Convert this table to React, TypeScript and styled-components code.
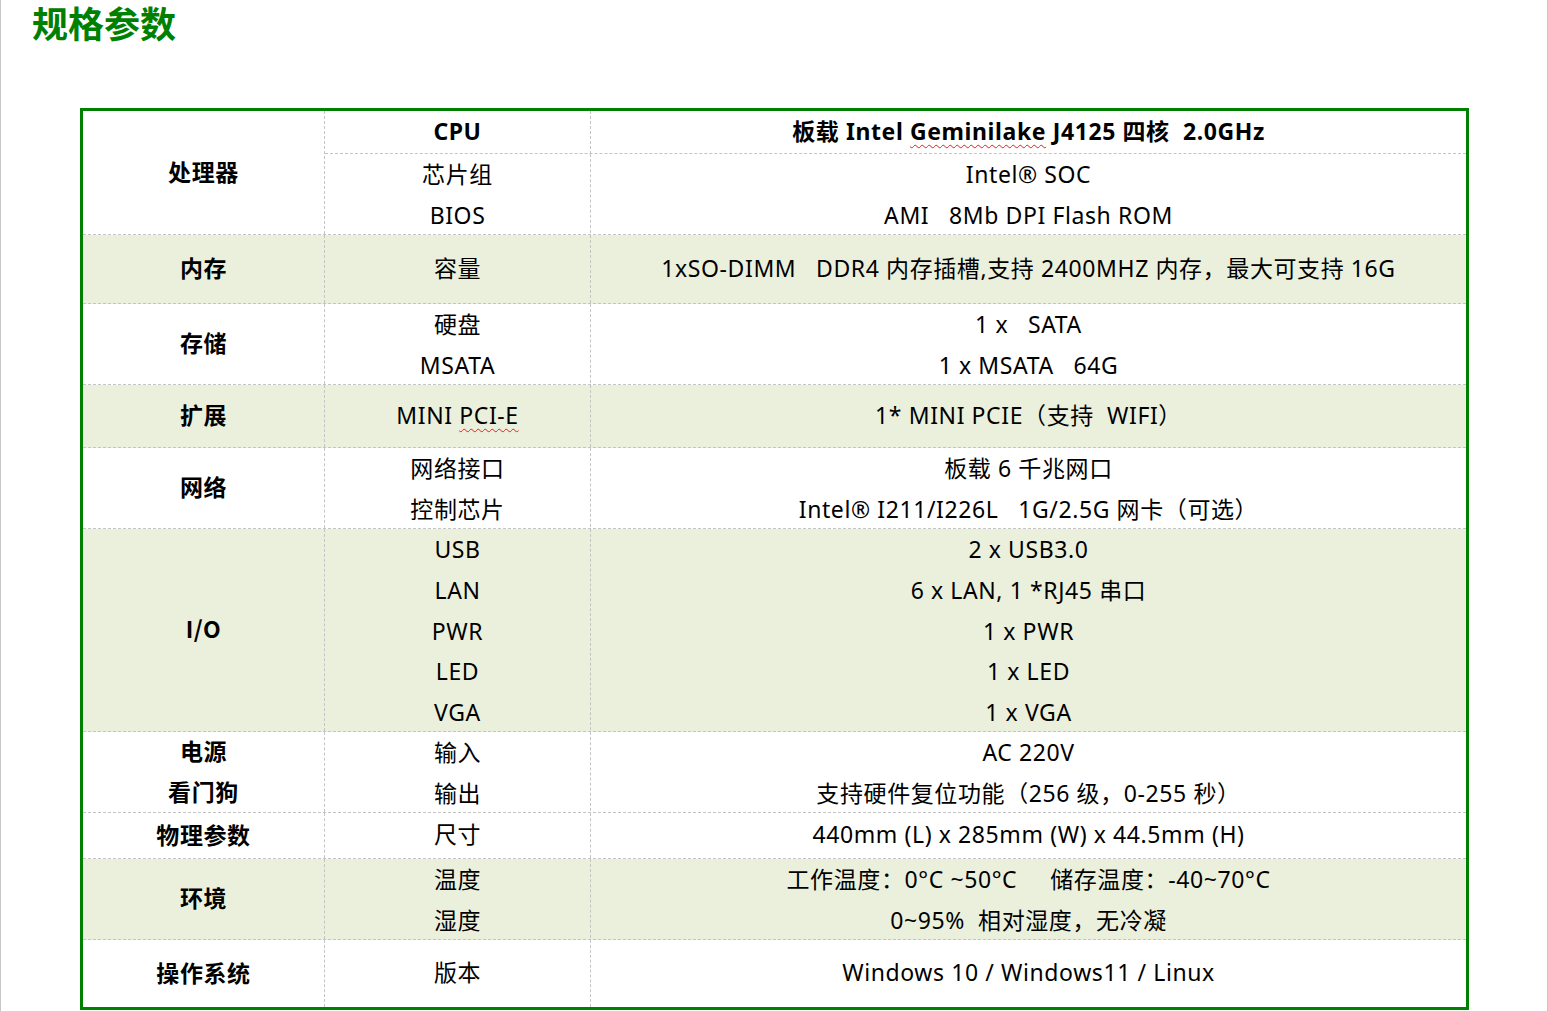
import React from "react";
import styled, { createGlobalStyle } from "styled-components";

const Global = createGlobalStyle`
  html, body { margin: 0; padding: 0; background: #fff; }
  * { box-sizing: border-box; }
`;

const Page = styled.div`
  width: 1548px;
  height: 1011px;
  border-left: 1px solid #c8c8c8;
  border-right: 1px solid #c8c8c8;
  overflow: hidden;
  font-family: "Noto Sans", "Noto Sans CJK SC", sans-serif;
  color: #000;
`;

const Title = styled.h1`
  margin: 0 0 0 31px;
  padding-top: 2px;
  height: 44px;
  font-size: 36px;
  line-height: 40px;
  font-weight: 700;
  color: #008000;
  font-family: "Noto Sans CJK SC", sans-serif;
`;

const Table = styled.div`
  margin: 64px 0 0 79px;
  width: 1389px;
  border: 3px solid #008000;
  display: flex;
  flex-direction: column;
  font-size: 23px;
  letter-spacing: 0.6px;
`;

const Group = styled.div<{ $h: number; $shade?: boolean; $last?: boolean }>`
  display: flex;
  height: ${(p) => p.$h}px;
  background: ${(p) => (p.$shade ? "#ebf0dd" : "#fff")};
  border-bottom: ${(p) => (p.$last ? "none" : "1px dashed #c4c4c4")};
`;

const LabelCell = styled.div`
  width: 242px;
  flex: none;
  border-right: 1px dashed #c4c4c4;
  display: flex;
  flex-direction: column;
  justify-content: center;
  align-items: center;
  padding-bottom: 3px;
  font-weight: 700;
  font-family: "Noto Sans CJK SC", sans-serif;
`;

const Body = styled.div`
  flex: 1;
  display: flex;
  flex-direction: column;
`;

const SubRow = styled.div<{ $h?: number; $divider?: boolean }>`
  display: grid;
  grid-template-columns: 266px 1fr;
  ${(p) => (p.$h ? `height: ${p.$h}px; flex: none;` : "flex: 1;")}
  border-bottom: ${(p) => (p.$divider ? "1px dashed #c4c4c4" : "none")};
`;

const KeyCell = styled.div<{ $bold?: boolean }>`
  border-right: 1px dashed #c4c4c4;
  display: flex;
  flex-direction: column;
  justify-content: center;
  align-items: center;
  padding-bottom: 2px;
  font-weight: ${(p) => (p.$bold ? 700 : 400)};
`;

const ValueCell = styled.div<{ $bold?: boolean }>`
  display: flex;
  flex-direction: column;
  justify-content: center;
  align-items: center;
  padding-bottom: 2px;
  font-weight: ${(p) => (p.$bold ? 700 : 400)};
`;

const Line = styled.div`
  height: 40.75px;
  line-height: 40.75px;
  white-space: pre;
  flex: none;
`;

const Spell = styled.span`
  text-decoration: underline wavy #e02020;
  text-decoration-thickness: 1px;
  text-underline-offset: 4px;
`;

type Row = { h: number; shade?: boolean; label: React.ReactNode[]; keys: React.ReactNode[]; vals: React.ReactNode[] };

const rows: Row[] = [
  { h: 69, shade: true, label: ["内存"], keys: ["容量"], vals: ["1xSO-DIMM   DDR4 内存插槽,支持 2400MHZ 内存，最大可支持 16G"] },
  { h: 81, label: ["存储"], keys: ["硬盘", "MSATA"], vals: ["1 x   SATA", "1 x MSATA   64G"] },
  {
    h: 63,
    shade: true,
    label: ["扩展"],
    keys: [<>MINI <Spell>PCI-E</Spell></>],
    vals: ["1* MINI PCIE（支持  WIFI）"],
  },
  { h: 81, label: ["网络"], keys: ["网络接口", "控制芯片"], vals: ["板载 6 千兆网口", "Intel® I211/I226L   1G/2.5G 网卡（可选）"] },
  {
    h: 203,
    shade: true,
    label: ["I/O"],
    keys: ["USB", "LAN", "PWR", "LED", "VGA"],
    vals: ["2 x USB3.0", "6 x LAN, 1 *RJ45 串口", "1 x PWR", "1 x LED", "1 x VGA"],
  },
  { h: 81, label: ["电源", "看门狗"], keys: ["输入", "输出"], vals: ["AC 220V", "支持硬件复位功能（256 级，0-255 秒）"] },
  { h: 46, label: ["物理参数"], keys: ["尺寸"], vals: ["440mm (L) x 285mm (W) x 44.5mm (H)"] },
  {
    h: 81,
    shade: true,
    label: ["环境"],
    keys: ["温度", "湿度"],
    vals: ["工作温度：0°C ~50°C     储存温度：-40~70°C", "0~95%  相对湿度，无冷凝"],
  },
  { h: 67, label: ["操作系统"], keys: ["版本"], vals: ["Windows 10 / Windows11 / Linux"] },
];

export default function App() {
  return (
    <Page>
      <Global />
      <Title>规格参数</Title>
      <Table>
        <Group $h={124}>
          <LabelCell>
            <Line>处理器</Line>
          </LabelCell>
          <Body>
            <SubRow $h={43} $divider>
              <KeyCell $bold>
                <Line>CPU</Line>
              </KeyCell>
              <ValueCell $bold>
                <Line>
                  板载 Intel <Spell>Geminilake</Spell> J4125 四核  2.0GHz
                </Line>
              </ValueCell>
            </SubRow>
            <SubRow>
              <KeyCell>
                <Line>芯片组</Line>
                <Line>BIOS</Line>
              </KeyCell>
              <ValueCell>
                <Line>Intel® SOC</Line>
                <Line>AMI   8Mb DPI Flash ROM</Line>
              </ValueCell>
            </SubRow>
          </Body>
        </Group>
        {rows.map((r, i) => (
          <Group key={i} $h={r.h} $shade={r.shade} $last={i === rows.length - 1}>
            <LabelCell>
              {r.label.map((t, j) => (
                <Line key={j}>{t}</Line>
              ))}
            </LabelCell>
            <Body>
              <SubRow>
                <KeyCell>
                  {r.keys.map((t, j) => (
                    <Line key={j}>{t}</Line>
                  ))}
                </KeyCell>
                <ValueCell>
                  {r.vals.map((t, j) => (
                    <Line key={j}>{t}</Line>
                  ))}
                </ValueCell>
              </SubRow>
            </Body>
          </Group>
        ))}
      </Table>
    </Page>
  );
}
